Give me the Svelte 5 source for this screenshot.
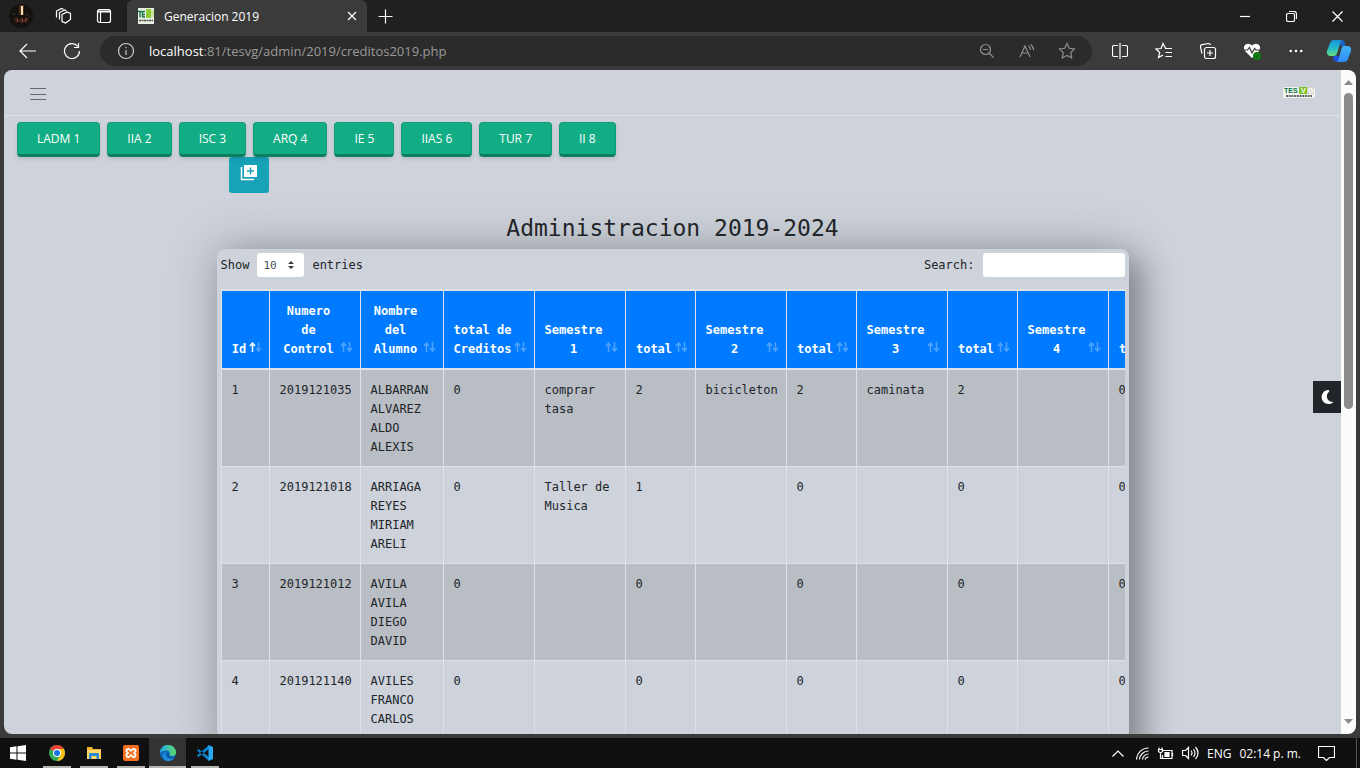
<script>
  let url = $state("localhost:81/tesvg/admin/2019/creditos2019.php");
  let pageSize = $state("10");
  let search = $state("");

  const careers = ["LADM 1", "IIA 2", "ISC 3", "ARQ 4", "IE 5", "IIAS 6", "TUR 7", "II 8"];

  const columns = [
    { title: "Id", size: "id" },
    { title: "Numero de Control", size: "wide" },
    { title: "Nombre del Alumno", size: "name" },
    { title: "total de Creditos", size: "wide" },
    { title: "Semestre 1", size: "wide" },
    { title: "total", size: "total" },
    { title: "Semestre 2", size: "wide" },
    { title: "total", size: "total" },
    { title: "Semestre 3", size: "wide" },
    { title: "total", size: "total" },
    { title: "Semestre 4", size: "wide" },
    { title: "total", size: "total" },
  ];

  const students = [
    ["1", "2019121035", "ALBARRAN ALVAREZ ALDO ALEXIS", "0", "comprar tasa", "2", "bicicleton", "2", "caminata", "2", "", "0"],
    ["2", "2019121018", "ARRIAGA REYES MIRIAM ARELI", "0", "Taller de Musica", "1", "", "0", "", "0", "", "0"],
    ["3", "2019121012", "AVILA AVILA DIEGO DAVID", "0", "", "0", "", "0", "", "0", "", "0"],
    ["4", "2019121140", "AVILES FRANCO CARLOS", "0", "", "0", "", "0", "", "0", "", "0"],
  ];
</script>

<div class="desktop">
  <div class="tabbar">
    <button class="avatar" aria-label="Profile">
      <svg width="24" height="24" viewBox="0 0 24 24">
        <circle cx="12" cy="12" r="12" fill="#15110f" />
        <path d="M10 1h5v10h-5z" fill="#6b4a2a" opacity=".6" />
        <path d="M12 2h2v9h-2z" fill="#f3dfb4" />
        <path d="M5 14l3-1 2 3 2-2 3 2 3-3 2 2-2 4-3-2-2 3-3-3-3 2z" fill="#3f211c" />
        <path d="M8 15l1 3M13 14l1 4M17 14l-1 4" stroke="#8a4d3c" fill="none" />
        <path d="M3 9l4 2M17 10l4 3" stroke="#243b2b" fill="none" />
      </svg>
    </button>
    <button class="tabicon" aria-label="Workspaces">
      <svg width="18" height="18" viewBox="0 0 18 18" class="line">
        <path d="M8 7.500l5-2.500 3.500 1.500v6L11.500 16 8 14.500z" />
        <path d="M5.500 12.500V5.500L10.500 3l2 .800M2.500 10.500V4l5-2.500 2 .700" />
      </svg>
    </button>
    <button class="tabicon" aria-label="Tab actions">
      <svg width="16" height="16" viewBox="0 0 16 16" class="line">
        <rect x="1.500" y="1.500" width="13" height="13" rx="2" />
        <path d="M1.500 3h13M1.500 4h13M4.500 4v10.500" />
      </svg>
    </button>
    <div class="tab">
      <svg width="16" height="16" viewBox="0 0 16 16">
        <rect width="16" height="16" fill="#e9efe3" />
        <path d="M0 3.500h4M2 3.500v6M4.500 3v6.500M5 3.500h2M5 6.500h2M5 9h2" stroke="#17754a" stroke-width="1.400" />
        <path d="M8 1h5v9H8z" fill="#8ccb34" />
        <path d="M13 2h3v7h-3z" fill="#c8e39a" />
        <path d="M1 12.500h14" stroke="#4c5148" stroke-width="1.500" stroke-dasharray="2 .500" />
      </svg>
      <span class="tabtitle">Generacion 2019</span>
      <button class="tabclose" aria-label="Close tab">
        <svg width="10" height="10" viewBox="0 0 10 10" class="line"><path d="M1 1l8 8M9 1L1 9" /></svg>
      </button>
    </div>
    <button class="newtab" aria-label="New tab">
      <svg width="15" height="15" viewBox="0 0 15 15" class="line"><path d="M7.500 0.500v14M.500 7.500h14" /></svg>
    </button>
    <div class="spacer"></div>
    <button class="winbtn" aria-label="Minimize">
      <svg width="10" height="10" viewBox="0 0 10 10" class="line"><path d="M0 5.500h10" /></svg>
    </button>
    <button class="winbtn" aria-label="Restore">
      <svg width="11" height="11" viewBox="0 0 11 11" class="line">
        <rect x=".500" y="2.500" width="8" height="8" rx="1.500" />
        <path d="M3 .500h5a2.500 2.500 0 0 1 2.500 2.500v5" />
      </svg>
    </button>
    <button class="winbtn" aria-label="Close">
      <svg width="11" height="11" viewBox="0 0 11 11" class="line"><path d="M.500.500l10 10M10.500.500l-10 10" /></svg>
    </button>
  </div>

  <div class="toolbar">
    <button class="tool" aria-label="Back">
      <svg width="18" height="16" viewBox="0 0 18 16" class="line"><path d="M17 8H1.500M8 1L1 8l7 7" /></svg>
    </button>
    <button class="tool" aria-label="Refresh">
      <svg width="18" height="18" viewBox="0 0 18 18" class="line">
        <path d="M16.500 9a7.500 7.500 0 1 1-1.700-4.700M15.500 1v4.500H11" />
      </svg>
    </button>
    <div class="address">
      <button class="addricon" aria-label="Site information">
        <svg width="18" height="18" viewBox="0 0 18 18" class="line light">
          <circle cx="9" cy="9" r="7.500" /><path d="M9 8v5M9 5v1.300" />
        </svg>
      </button>
      <div class="urlbox">
        <input aria-label="Address" bind:value={url} />
        <span aria-hidden="true"><b>localhost</b>:81/tesvg/admin/2019/creditos2019.php</span>
      </div>
      <button class="addricon" aria-label="Zoom out">
        <svg width="16" height="16" viewBox="0 0 16 16" class="line dim">
          <circle cx="6.500" cy="6.500" r="5" /><path d="M4 6.500h5M10 10l4.500 4.500" />
        </svg>
      </button>
      <button class="addricon" aria-label="Read aloud">
        <svg width="18" height="16" viewBox="0 0 18 16" class="line dim">
          <path d="M2 14L7 3l5 11M4 10h6M10.500 3q2 1.500 2 4M12.500 1.500q3 2 3 5.500" />
        </svg>
      </button>
      <button class="addricon" aria-label="Add to favorites">
        <svg width="18" height="18" viewBox="0 0 18 18" class="line dim">
          <path d="M9 1.500l2.300 4.800 5.200.7-3.800 3.600 1 5.400L9 13.500 4.300 16l1-5.400L1.500 7l5.200-.7z" />
        </svg>
      </button>
    </div>
    <button class="tool" aria-label="Split screen">
      <svg width="16" height="16" viewBox="0 0 16 16" class="line">
        <path d="M6 2.500H2A1.500 1.500 0 0 0 .500 4v8A1.500 1.500 0 0 0 2 13.500h4M10 2.500h4A1.500 1.500 0 0 1 15.500 4v8a1.500 1.500 0 0 1-1.500 1.500h-4M8 0v16" />
      </svg>
    </button>
    <button class="tool" aria-label="Favorites">
      <svg width="18" height="18" viewBox="0 0 18 18" class="line">
        <path d="M11 5.500L9.800 5 8 1.500 6 6.500l-5 .5 3.700 3.500-1.200 5L8 13M10 6.500h7M10.500 10.500H17M10.500 14.500H17" />
      </svg>
    </button>
    <button class="tool" aria-label="Collections">
      <svg width="18" height="18" viewBox="0 0 18 18" class="line">
        <rect x="5.500" y="5.500" width="11" height="11" rx="2" />
        <path d="M11 8v6M8 11h6M3 11.500L1.500 5a2 2 0 0 1 1.500-2.300L9.500 1.500a2 2 0 0 1 2 1.500" />
      </svg>
    </button>
    <button class="tool" aria-label="Browser essentials">
      <svg width="18" height="18" viewBox="0 0 18 18">
        <path d="M9 16L2 9Q-.500 5 2.500 2.500 6 .500 9 3.500 12 .500 15.500 2.500 18.500 5 16 9z" fill="#fff" />
        <path d="M0 8h4.500l2-2.500L9 11l2.500-4.500L13 8h5" stroke="#3b3b3b" stroke-width="1.200" fill="none" />
        <circle cx="14" cy="14" r="4" fill="#107c10" />
        <path d="M12.500 14l1 1 2-2" stroke="#0b4d0b" fill="none" />
      </svg>
    </button>
    <button class="tool" aria-label="Settings and more">
      <svg width="14" height="4" viewBox="0 0 14 4" fill="#fff">
        <circle cx="1.800" cy="2" r="1.300" /><circle cx="7" cy="2" r="1.300" /><circle cx="12.200" cy="2" r="1.300" />
      </svg>
    </button>
    <button class="copilot" aria-label="Copilot">
      <svg width="24" height="24" viewBox="0 0 24 24">
        <defs>
          <linearGradient id="cpa" x1="0" y1="0" x2="0" y2="1"><stop stop-color="#1793d8" /><stop offset=".5" stop-color="#22b9cf" /><stop offset="1" stop-color="#6ade7c" /></linearGradient>
          <linearGradient id="cpb" x1="0" y1="0" x2="0" y2="1"><stop stop-color="#3fb4f5" /><stop offset="1" stop-color="#2f8df8" /></linearGradient>
        </defs>
        <path d="M6 16.500h5l3 6H9q-2 0-2.500-2z" fill="#1f50dc" />
        <path d="M13 1h2q2 0 2.500 2l1 4h-5z" fill="#1c66c9" />
        <path d="M7 1h8q-1 0-1.500 2L10.500 13q-1 4-4 4H3q-4-1-3-5L3 4q1-3 4-3z" fill="url(#cpa)" />
        <path d="M17 23H9q2 0 2.500-2l2.500-10q1-4 3-4h4q4 1 3 5l-3 8q-1 3-4 3z" fill="url(#cpb)" />
      </svg>
    </button>
  </div>

  <div class="viewport">
    <div class="page">
      <nav class="navbar">
        <button class="burger" aria-label="Menu">
          <svg width="16" height="13" viewBox="0 0 16 13" stroke="#666a6f" stroke-width="1"><path d="M0 .500h16M0 6.500h16M0 11.500h16" /></svg>
        </button>
        <svg class="brand" width="32" height="11" viewBox="0 0 32 11" role="img" aria-label="TESVG">
          <rect width="32" height="11" rx="2" fill="#f1f3ee" />
          <rect x="16" width="8" height="7" fill="#7cc225" />
          <rect x="24" width="7" height="7" fill="#d5d2cb" />
          <g font-family="Liberation Sans, sans-serif" font-weight="bold" font-size="7">
            <text x="1" y="6" fill="#0d7048">TES</text>
            <text x="18" y="6" fill="#fff">V</text>
            <text x="25" y="6" fill="#fff">G</text>
          </g>
          <path d="M3 9h26" stroke="#333" stroke-width="1.500" stroke-dasharray="2 .700" />
        </svg>
      </nav>

      <div class="careers">
        {#each careers as career}
          <button class="career">{career}</button>
        {/each}
      </div>

      <main class="container">
        <button class="add" aria-label="Agregar">
          <svg width="18" height="17" viewBox="0 0 18 17">
            <path d="M4 1h13v12H4z" fill="#fff" />
            <path d="M1.500 3v12.500H14" stroke="#fff" stroke-width="1.500" fill="none" />
            <path d="M10.500 3.500v7M7 7h7" stroke="#17a2b8" stroke-width="1.500" />
          </svg>
        </button>
        <h1>Administracion 2019-2024</h1>

        <section class="card">
          <div class="controls">
            <label class="length">
              Show
              <span class="selectbox">
                <select bind:value={pageSize}>
                  <option>10</option>
                  <option>25</option>
                  <option>50</option>
                  <option>100</option>
                </select>
                <svg width="6" height="8" viewBox="0 0 6 8" fill="#343a40"><path d="M0 3l3-3 3 3zM0 5h6L3 8z" /></svg>
              </span>
              entries
            </label>
            <label class="filter">
              Search:
              <input type="search" bind:value={search} />
            </label>
          </div>

          <div class="scroller">
            <table>
              <colgroup>
                {#each columns as column}
                  <col class={column.size} />
                {/each}
              </colgroup>
              <thead>
                <tr>
                  {#each columns as column, i}
                    <th>
                      {column.title}
                      <svg class="sort" width="13" height="10" viewBox="0 0 13 10" fill="none" stroke="#fff" stroke-width="1.500">
                        <path d="M3.500 10V1M1 4l2.500-3L6 4" opacity={i === 0 ? 1 : 0.3} />
                        <path d="M9.500 0v9M7 6l2.500 3L12 6" opacity=".3" />
                      </svg>
                    </th>
                  {/each}
                </tr>
              </thead>
              <tbody>
                {#each students as student}
                  <tr>
                    {#each student as value}
                      <td>{value}</td>
                    {/each}
                  </tr>
                {/each}
              </tbody>
            </table>
          </div>
        </section>
      </main>

      <button class="theme" aria-label="Dark mode">
        <svg width="14" height="14" viewBox="0 0 14 14"><path d="M8.500 0A7 7 0 1 0 13.500 12Q9 12 7.500 9 5.500 5 9.500 1z" fill="#fff" /></svg>
      </button>
    </div>

    <div class="scrollbar">
      <svg width="9" height="5" viewBox="0 0 9 5" fill="#8b8b8b"><path d="M0 5l4.500-5L9 5z" /></svg>
      <div class="thumb"></div>
      <svg width="9" height="5" viewBox="0 0 9 5" fill="#8b8b8b"><path d="M0 0h9L4.500 5z" /></svg>
    </div>
  </div>

  <footer class="taskbar">
    <button class="start" aria-label="Start">
      <svg width="16" height="16" viewBox="0 0 16 16" fill="#fff"><path d="M0 2.200L6.500 1.300v6.200H0zM7.500 1.200L16 0v7.500H7.500zM0 8.500h6.500v6.200L0 13.800zM7.500 8.500H16V16l-8.500-1.200z" /></svg>
    </button>
    <button class="app" aria-label="Chrome">
      <svg width="16" height="16" viewBox="0 0 16 16">
        <circle cx="8" cy="8" r="8" fill="#34a853" />
        <path d="M8 8L1.100 4A8 8 0 0 1 14.900 4z" fill="#ea4335" />
        <path d="M8 4h6.900A8 8 0 0 1 8 16l3.500-6z" fill="#fbc116" />
        <circle cx="8" cy="8" r="4" fill="#fff" />
        <circle cx="8" cy="8" r="3" fill="#1a73e8" />
      </svg>
    </button>
    <button class="app" aria-label="File Explorer">
      <svg width="16" height="14" viewBox="0 0 16 14">
        <path d="M1 1h5l1 2h8v9H1z" fill="#f5b52e" />
        <path d="M1 4h14v9H1z" fill="#ffd866" />
        <path d="M3 13V8q0-1 1-1h8q1 0 1 1v5h-2.500v-3h-5v3z" fill="#2d8ad0" />
      </svg>
    </button>
    <button class="app" aria-label="XAMPP">
      <svg width="16" height="16" viewBox="0 0 16 16">
        <rect width="16" height="16" rx="2" fill="#f5711e" />
        <path d="M4 4.500Q5.500 3 7 5q1 1.500 2 0 1.500-2 3-.500t-.500 3Q10.500 8 11.500 8.500 13.500 10 12 11.500T9 11q-1-1.500-2 0-1.500 2-3 .500t.500-3Q5.500 8 4.500 7.500 2.500 6 4 4.500z" fill="none" stroke="#fff" stroke-width="1.800" />
      </svg>
    </button>
    <button class="app active" aria-label="Edge">
      <svg width="16" height="16" viewBox="0 0 16 16">
        <defs>
          <linearGradient id="eda" x1="0" x2="1"><stop stop-color="#22a5e8" /><stop offset="1" stop-color="#5bdc6a" /></linearGradient>
        </defs>
        <circle cx="8" cy="8" r="8" fill="#0d68b8" />
        <path d="M0 8A8 8 0 0 1 16 7.500Q16 11 12 11q-3 0-2.500-1.500Q10.500 6 7 5.500 2 5 0 8z" fill="url(#eda)" />
        <path d="M6 7Q4 11 8 13q4 1.500 7-1Q12 17 7 15.900 2 14 3 9.500 4 7 6 7z" fill="#1b8ddc" />
        <path d="M9 8q-2 3 1 4.500 3 1 5-.500L14 13q-5 1.500-6.500-2Q7 9 9 8z" fill="#103f83" />
      </svg>
    </button>
    <button class="app" aria-label="Visual Studio Code">
      <svg width="16" height="16" viewBox="0 0 16 16">
        <path d="M0 5.500L1.500 4 12 12v4zM0 10.500L1.500 12 12 4V0z" fill="#0f83cf" />
        <path d="M11.500 0L16 2v12l-4.500 2z" fill="#29a9f2" />
      </svg>
    </button>
    <div class="spacer"></div>
    <div class="tray">
      <svg class="chevron" width="12" height="7" viewBox="0 0 12 7"><path d="M.500 6.500L6 1l5.500 5.500" /></svg>
      <svg width="13" height="13" viewBox="0 0 13 13" class="line">
        <path d="M.500 12.500A12 12 0 0 1 12.500 1M3.500 12.500A9 9 0 0 1 12.500 4M6.500 12.500A6 6 0 0 1 12.500 7M9 12.500A3.500 3.500 0 0 1 12.500 10" />
      </svg>
      <svg width="17" height="13" viewBox="0 0 17 13" class="line">
        <path d="M6 3.500h9v8H5.500V8M15.500 6v3M1 2.500h5M2 .500v2M5 .500v2M1.500 2.500v2l2 1.500 2-1.500v-2M3.500 6v5.500h2" />
        <path d="M8 5.500h4v4H8z" fill="#fff" />
      </svg>
      <svg width="17" height="14" viewBox="0 0 17 14" class="line">
        <path d="M.500 4.500h3l3-3v11l-3-3h-3zM9 4.500q2 2.500 0 5M11.500 3q3 4 0 8M13.500 1q5 6 0 12" />
      </svg>
      <span>ENG</span>
      <time>02:14 p. m.</time>
      <svg width="17" height="16" viewBox="0 0 17 16" class="line"><path d="M.500 1.500h16v11h-5L8.500 15.500l-3-3h-5z" /></svg>
    </div>
  </footer>
</div>

<style>
  :global(body) {
    margin: 0;
    background: #3b3b3b;
  }

  .desktop {
    display: flex;
    flex-direction: column;
    height: 100vh;
    overflow: hidden;
    background: #3b3b3b;
    font-family: "Open Sans", "Noto Sans", sans-serif;
    color: #fff;
  }

  button {
    display: flex;
    align-items: center;
    justify-content: center;
    flex: none;
    padding: 0;
    border: 0;
    background: none;
    color: inherit;
    font: inherit;
  }

  svg {
    flex: none;
    display: block;
  }

  .line {
    fill: none;
    stroke: #fff;
    stroke-width: 1.2;
  }

  .light {
    stroke: #ccc;
  }

  .dim {
    stroke: #8f8f8f;
  }

  .spacer {
    flex: 1;
  }

  .tabbar {
    display: flex;
    height: 32px;
    background: #202020;
  }

  .avatar {
    width: 42px;
  }

  .tabicon {
    width: 41px;
  }

  .tab {
    display: flex;
    align-items: center;
    width: 240px;
    box-sizing: border-box;
    margin-left: 3px;
    padding: 0 10px 0 11px;
    border-radius: 6px 6px 0 0;
    background: #3b3b3b;
    font-size: 12px;
  }

  .tabtitle {
    flex: 1;
    padding-left: 10px;
  }

  .tabclose {
    width: 10px;
  }

  .newtab {
    width: 36px;
  }

  .winbtn {
    width: 46px;
  }

  .toolbar {
    display: flex;
    align-items: center;
    height: 38px;
    padding-left: 6px;
  }

  .tool {
    width: 44px;
  }

  .copilot {
    width: 42px;
  }

  .address {
    display: flex;
    align-items: center;
    flex: 1;
    height: 30px;
    margin: 0 6px;
    padding: 0 5px 0 6px;
    border-radius: 15px;
    background: #2b2b2b;
    font-size: 13px;
  }

  .addricon {
    width: 40px;
  }

  .urlbox {
    position: relative;
    flex: 1;
    padding-left: 3px;
    line-height: 20px;
    color: #9a9a9a;
  }

  .urlbox b {
    font-weight: 400;
    color: #fff;
  }

  .urlbox input {
    position: absolute;
    inset: 0;
    width: 100%;
    padding: 0 0 0 3px;
    border: 0;
    background: none;
    color: transparent;
    font: inherit;
  }

  .viewport {
    display: flex;
    flex: 1;
    min-height: 0;
    margin: 0 4px 4px;
    border-radius: 8px;
    overflow: hidden;
  }

  .page {
    position: relative;
    flex: 1;
    min-width: 0;
    overflow: hidden;
    background: #ced3db;
    color: #212529;
  }

  .navbar {
    display: flex;
    align-items: center;
    justify-content: space-between;
    height: 45px;
    padding: 0 26px;
    border-bottom: 1px solid #dee2e6;
  }

  .burger {
    padding-top: 3px;
  }

  .careers {
    display: flex;
    gap: 7px;
    padding: 6px 13px 0;
  }

  .career {
    height: 35px;
    padding: 0 19px;
    border: 1px solid #0f9d77;
    border-bottom: 3px solid #0d7e5f;
    border-radius: 4px;
    background: #12ad84;
    box-shadow: 0 2px 4px rgba(0, 0, 0, 0.12);
    color: #fff;
    font-size: 12px;
  }

  .container {
    max-width: 912px;
    margin: 0 auto;
    font-family: "DejaVu Sans Mono", monospace;
    font-size: 12px;
    line-height: 19px;
  }

  .add {
    width: 40px;
    height: 36px;
    margin-left: 12px;
    padding-bottom: 6px;
    border-radius: 3px;
    background: #17a2b8;
  }

  h1 {
    margin: 20px 0 6px;
    text-align: center;
    font-size: 23px;
    font-weight: 400;
    line-height: 30px;
  }

  .card {
    padding: 4px;
    border-radius: 8px;
    background: #ced3db;
    box-shadow:
      0 0 50px rgba(0, 0, 0, 0.25),
      15px 10px 30px rgba(0, 0, 0, 0.25);
  }

  .controls {
    display: flex;
    align-items: center;
    justify-content: space-between;
    padding-bottom: 12px;
  }

  .length,
  .filter {
    display: flex;
    align-items: center;
    gap: 8px;
  }

  .selectbox {
    display: flex;
    align-items: center;
    height: 24px;
    padding-right: 10px;
    border-radius: 3px;
    background: #fff;
  }

  select {
    appearance: none;
    width: 31px;
    padding: 0 0 0 6px;
    border: 0;
    background: none;
    color: #495057;
    font-family: inherit;
    font-size: 11px;
  }

  .filter input {
    width: 142px;
    height: 24px;
    box-sizing: border-box;
    border: 0;
    border-radius: 3px;
    background: #fff;
  }

  .scroller {
    overflow: hidden;
  }

  table {
    width: 100%;
    table-layout: fixed;
    border-spacing: 0;
    border-top: 1px solid #dee2e6;
  }

  .id {
    width: 48px;
  }

  .wide {
    width: 91px;
  }

  .name {
    width: 83px;
  }

  .total {
    width: 70px;
  }

  th {
    position: relative;
    padding: 11px 22px 9px 10px;
    border-top: 1px solid #dee2e6;
    border-bottom: 1px solid #dee2e6;
    border-left: 1px solid #dee2e6;
    background: #007bff;
    color: #fff;
    text-align: center;
    vertical-align: bottom;
  }

  .sort {
    position: absolute;
    right: 7px;
    bottom: 16px;
  }

  td {
    height: 76px;
    padding: 11px 8px 9px 10px;
    border-top: 1px solid #dee2e6;
    border-left: 1px solid #dee2e6;
    vertical-align: top;
  }

  tbody tr:nth-child(odd) {
    background: #b9bec4;
  }

  .theme {
    position: absolute;
    top: 311px;
    right: 0;
    width: 28px;
    height: 32px;
    background: #212529;
  }

  .scrollbar {
    display: flex;
    flex-direction: column;
    align-items: center;
    justify-content: space-between;
    width: 15px;
    padding: 10px 0;
    box-sizing: border-box;
    background: #fcfcfc;
  }

  .thumb {
    width: 9px;
    height: 49%;
    margin: 8px 0 auto;
    border-radius: 5px;
    background: #8b8b8b;
  }

  .taskbar {
    display: flex;
    height: 30px;
    background: #101010;
  }

  .start {
    width: 38px;
    padding-right: 2px;
  }

  .app {
    position: relative;
    width: 37px;
  }

  .app::after {
    content: "";
    position: absolute;
    left: 5px;
    right: 4px;
    bottom: 0;
    height: 2px;
    background: #b5b5b0;
  }

  .app.active {
    background: #333;
  }

  .app.active::after {
    left: 0;
    right: 0;
  }

  .tray {
    display: flex;
    align-items: center;
    gap: 8px;
    padding-right: 21px;
    margin-right: 3px;
    border-right: 1px solid #555;
    font-size: 12px;
  }

  .chevron {
    margin-right: 4px;
    fill: none;
    stroke: #fff;
    stroke-width: 1.2;
  }

  .tray time {
    padding-right: 9px;
  }
</style>
